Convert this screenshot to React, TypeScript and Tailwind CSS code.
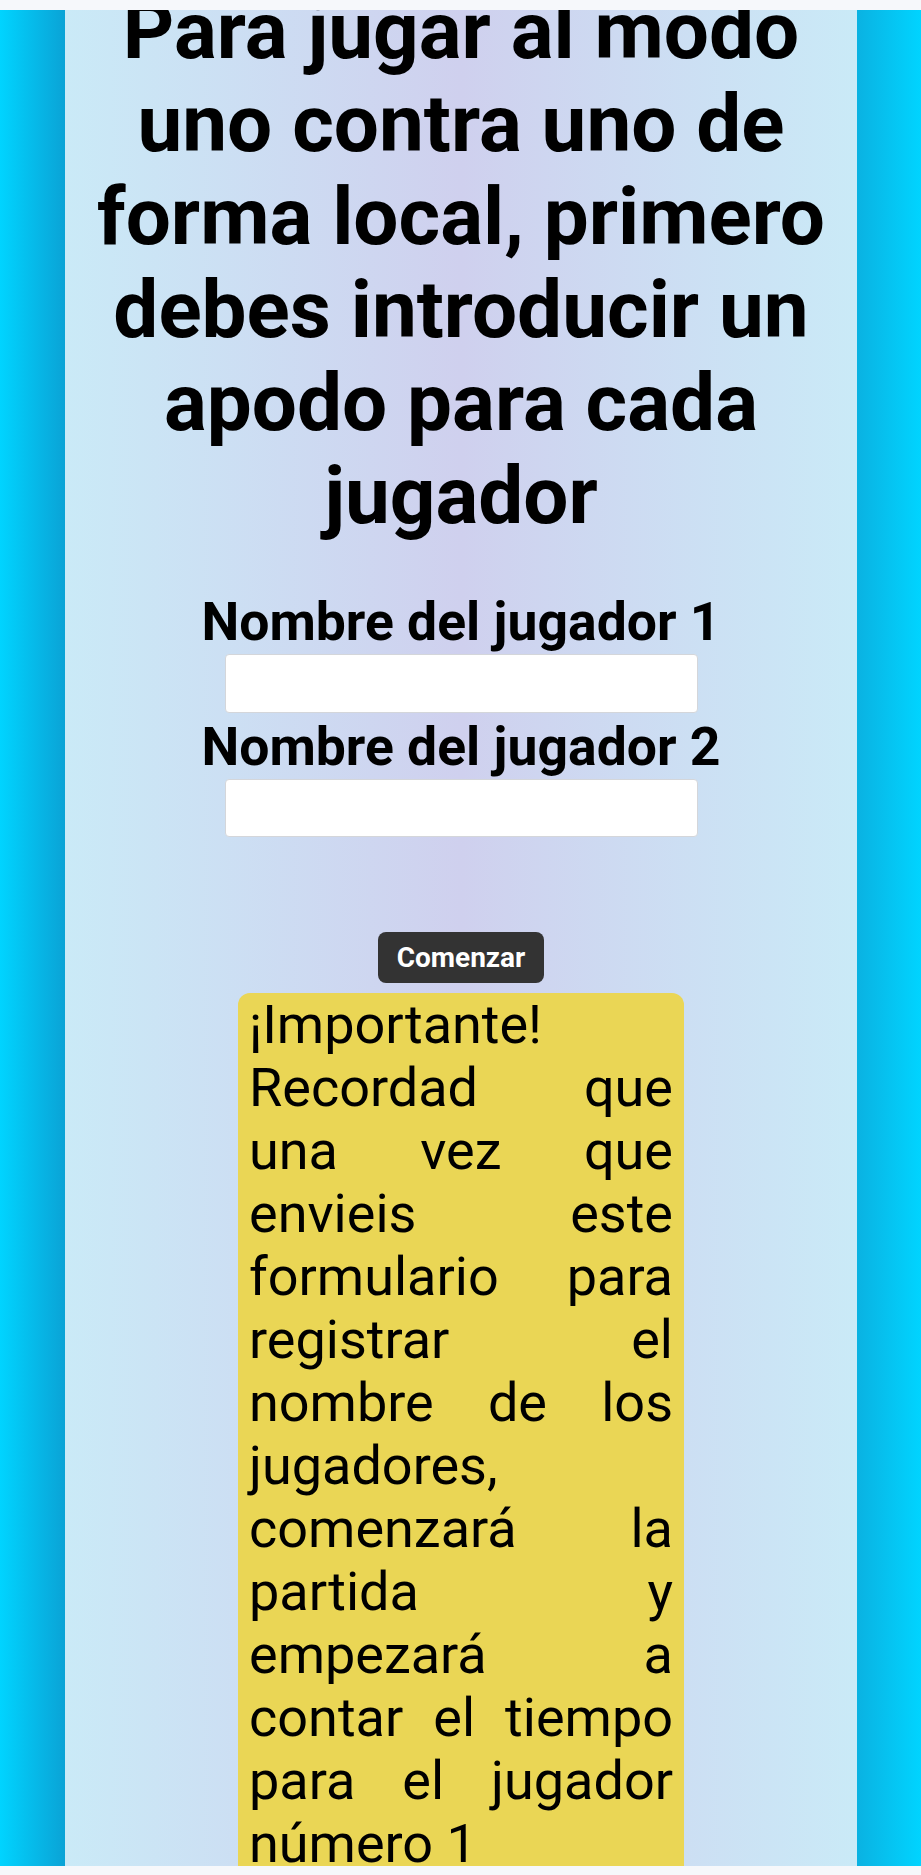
import React from 'react'

const aviso =
  '¡Importante! Recordad que una vez que envieis este formulario para registrar el nombre de los jugadores, comenzará la partida y empezará a contar el tiempo para el jugador número 1'

export default function App() {
  return (
    <div className="w-[921px] h-[1875px] flex flex-col overflow-hidden bg-[#f6f8fb] font-['Roboto','Liberation_Sans',sans-serif] text-black">
      {/* barra superior */}
      <div className="h-[10px] shrink-0 bg-[#f6f8fb]" />

      <div className="flex h-[1856px] shrink-0 overflow-hidden">
        <div className="w-[65px] shrink-0 bg-gradient-to-r from-[#00d4ff] to-[#0aa3d6]" />

        <main className="w-[792px] shrink-0 flex flex-col items-center bg-[linear-gradient(to_right,#caeaf7,#cfd0ee_50%,#caeaf7)]">
          <h1 className="mt-[-25px] max-w-[760px] text-center text-[80px] leading-[93px] font-bold">
            Para jugar al modo uno contra uno de forma local, primero debes introducir un apodo para cada jugador
          </h1>

          <form className="flex flex-col items-center mt-[48px]" onSubmit={(e) => e.preventDefault()}>
            <label htmlFor="j1" className="text-[53.5px] leading-[61px] font-bold">
              Nombre del jugador 1
            </label>
            <input
              id="j1"
              type="text"
              className="mt-[2px] w-[473px] h-[59px] bg-white border border-[#d4d6da] rounded-[4px]"
            />
            <label htmlFor="j2" className="mt-[3px] text-[53.5px] leading-[61px] font-bold">
              Nombre del jugador 2
            </label>
            <input
              id="j2"
              type="text"
              className="mt-[2px] w-[473px] h-[58px] bg-white border border-[#d4d6da] rounded-[4px]"
            />

            <button
              type="submit"
              className="mt-[95px] w-[166px] h-[51px] rounded-[8px] bg-[#333333] text-white text-[28px] font-bold"
            >
              Comenzar
            </button>
          </form>

          <div className="mt-[10px] w-[446px] px-[11px] pb-[20px] rounded-[12px] bg-[#ead655] text-[54px] leading-[63px] text-justify">
            {aviso}
          </div>
        </main>

        <div className="w-[64px] shrink-0 bg-gradient-to-r from-[#0ab2e2] to-[#00d4ff]" />
      </div>

      <div className="h-[9px] shrink-0 bg-[#f6f8fb]" />
    </div>
  )
}
